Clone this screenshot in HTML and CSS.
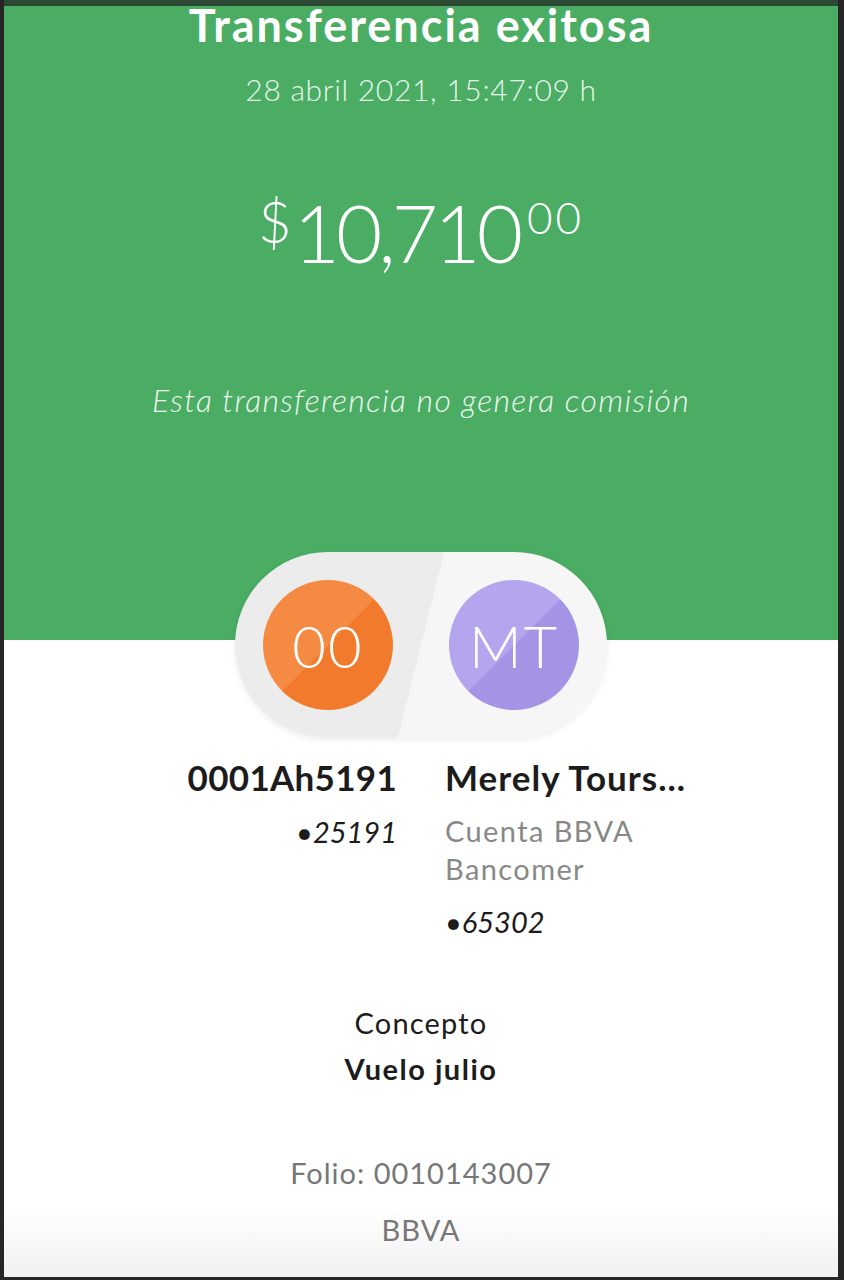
FILE: index.html
```html
<!DOCTYPE html>
<html lang="es">
<head>
  <meta charset="UTF-8" />
  <meta name="viewport" content="width=device-width, initial-scale=1.0"/>
  <title>Transferencia exitosa</title>
  <link rel="stylesheet" href="styles.css">
</head>
<body>

<main class="receipt">
  <section class="hero">
    <h1>Transferencia exitosa</h1>
    <p class="date">28 abril 2021, 15:47:09 h</p>
    <p class="amount"><span class="sign">$</span><span class="units">10,710</span><span class="cents">00</span></p>
    <p class="note">Esta transferencia no genera comisión</p>
  </section>

  <div class="parties">
    <div class="avatar orange">00</div>
    <div class="avatar purple">MT</div>
  </div>

  <div class="accounts">
    <div class="account from">
      <strong>0001Ah5191</strong>
      <span class="num">•25191</span>
    </div>
    <div class="account to">
      <strong>Merely Tours...</strong>
      <span class="bank">Cuenta BBVA<br>Bancomer</span>
      <span class="num">•65302</span>
    </div>
  </div>

  <div class="concept">
    <p>Concepto</p>
    <strong>Vuelo julio</strong>
  </div>

  <div class="folio">
    <p>Folio: 0010143007</p>
    <p>BBVA</p>
  </div>
</main>

</body>
</html>
```

FILE: styles.css
```css
/* Receipt styles */
:root {
  --green: #4aad63;
  --text-color: #1c1c1c;
  --muted: #777;
  --font-family: 'Lato', 'Noto Sans', sans-serif;
}

* {
  box-sizing: border-box;
  margin: 0;
  padding: 0;
  font-family: var(--font-family);
}

body {
  background: #262626;
  height: 1280px;
  overflow: hidden;
}

.receipt {
  margin: 0 6px 0 4px;
  height: 1277px;
  border-top: 6px solid #2c4934;
  background: linear-gradient(to bottom, var(--green) 0, var(--green) 634px, #fff 634px, #fff 1200px, #f1f1f1 100%);
  color: var(--text-color);
  display: flex;
  flex-direction: column;
  align-items: center;
}

.hero {
  color: #fff;
  text-align: center;
  display: flex;
  flex-direction: column;
  align-items: center;
}

h1 {
  font-size: 45px;
  font-weight: 700;
  letter-spacing: 2px;
  line-height: 42px;
  margin-top: -2px;
}

.date {
  font-size: 30px;
  font-weight: 300;
  letter-spacing: 0.7px;
  line-height: 36px;
  margin-top: 25px;
  color: #e9f6ec;
}

.amount {
  font-weight: 300;
  margin-top: 85px;
  display: flex;
  align-items: flex-start;
}

.amount .sign {
  font-size: 58px;
  line-height: 58px;
  margin-right: 2px;
}

.amount .units {
  font-size: 80px;
  line-height: 80px;
  letter-spacing: -4px;
}

.amount .cents {
  font-size: 44px;
  line-height: 50px;
  letter-spacing: 3px;
  margin-left: 8px;
}

.note {
  font-size: 32px;
  font-weight: 300;
  font-style: italic;
  letter-spacing: 1.3px;
  line-height: 36px;
  margin-top: 110px;
  color: #eef8f0;
}

.parties {
  margin-top: 134px;
  width: 372px;
  height: 186px;
  border-radius: 93px;
  padding: 28px;
  display: flex;
  justify-content: space-between;
  background: linear-gradient(104deg, #ececec 50%, #f6f6f6 50%);
  box-shadow: 0 2px 6px rgba(0, 0, 0, 0.08);
}

.avatar {
  width: 130px;
  height: 130px;
  border-radius: 50%;
  color: #fff;
  font-size: 58px;
  font-weight: 300;
  letter-spacing: 2px;
  display: flex;
  align-items: center;
  justify-content: center;
}

.orange {
  background: linear-gradient(135deg, #f58b43 50%, #f27a2d 50%);
}

.purple {
  background: linear-gradient(135deg, #b4a5ee 50%, #a594e6 50%);
}

.accounts {
  width: 100%;
  margin-top: 17px;
  display: flex;
  gap: 48px;
}

.account {
  flex: 1;
  display: flex;
  flex-direction: column;
}

.from {
  align-items: flex-end;
}

.account strong {
  font-size: 35px;
  font-weight: 700;
  letter-spacing: 1px;
  line-height: 44px;
}

.from strong {
  letter-spacing: 0.3px;
}

.account .num {
  font-size: 29px;
  font-style: italic;
  line-height: 36px;
  margin-top: 15px;
}

.account .bank {
  font-size: 29px;
  letter-spacing: 1.4px;
  line-height: 38px;
  color: #888;
  margin-top: 13px;
}

.to .num {
  margin-top: 16px;
}

.concept {
  margin-top: 65px;
  text-align: center;
  display: flex;
  flex-direction: column;
}

.concept p {
  font-size: 29px;
  letter-spacing: 1.2px;
  line-height: 36px;
}

.concept strong {
  font-size: 29px;
  font-weight: 700;
  letter-spacing: 1.5px;
  line-height: 36px;
  margin-top: 10px;
}

.folio {
  margin-top: 68px;
  text-align: center;
  color: var(--muted);
}

.folio p {
  font-size: 29px;
  letter-spacing: 1px;
  line-height: 36px;
  margin-bottom: 21px;
}
```
